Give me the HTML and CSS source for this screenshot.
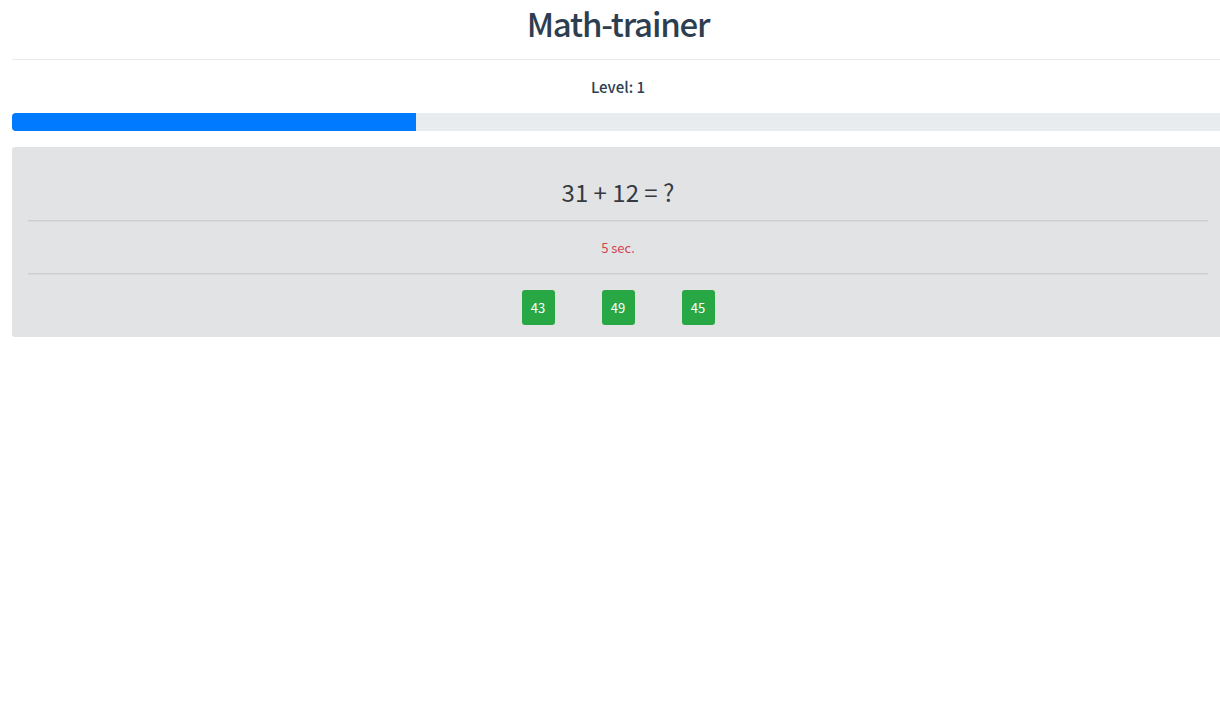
FILE: index.html
```html
<!DOCTYPE html>
<html lang="en">
<head>
<meta charset="utf-8">
<title>Math-trainer</title>
<link rel="stylesheet" href="styles.css">
</head>
<body>
<div class="app">
  <h1 class="title">Math-trainer</h1>
  <hr class="rule">
  <div class="level">Level: 1</div>
  <div class="progress"><div class="progress-bar" style="width: 33.3%"></div></div>
  <div class="card">
    <div class="question">31 + 12 = ?</div>
    <hr class="divider">
    <div class="timer">5 sec.</div>
    <hr class="divider">
    <div class="answers">
      <button class="answer">43</button>
      <button class="answer">49</button>
      <button class="answer">45</button>
    </div>
  </div>
</div>
</body>
</html>
```
FILE: styles.css
```css
html, body {
  margin: 0;
  padding: 0;
  overflow: hidden;
  background: #fff;
}
body {
  font-family: "Noto Sans CJK SC", "Noto Sans", sans-serif;
  color: #2c3e50;
}
.app {
  width: 1212px;
  margin-left: 12px;
  text-align: center;
}
.title {
  margin: 0;
  padding-top: 1px;
  font-size: 33px;
  font-weight: 500;
  letter-spacing: -1.2px;
  line-height: 44px;
  height: 52px;
  box-sizing: border-box;
  color: #2c3e50;
}
.rule {
  margin: 7px 0 0;
  border: 0;
  border-top: 1px solid #e9e9e9;
}
.level {
  margin-top: 16px;
  font-size: 15px;
  line-height: 22px;
  font-weight: 500;
  color: #2c3e50;
}
.progress {
  margin-top: 15px;
  height: 18px;
  background: #e9ecef;
  border-radius: 4px;
  overflow: hidden;
  display: flex;
}
.progress-bar {
  background: #007bff;
  height: 100%;
}
.card {
  margin-top: 16px;
  background: #e2e3e5;
  border-radius: 3px;
  padding: 16px 16px 12px;
  color: #343a40;
}
.question {
  font-size: 24px;
  line-height: 32px;
  margin-top: 13px;
  font-weight: 400;
}
.divider {
  margin: 12px 0 0;
  border: 0;
  border-top: 1px solid #cdced0;
  border-bottom: 1px solid #d8d9db;
}
.timer {
  font-size: 13px;
  color: #d0434f;
  line-height: 18px;
  margin: 17px 0 16px;
}
.answers {
  display: flex;
  justify-content: center;
  gap: 47px;
  margin-top: 15px;
}
.answer {
  width: 33px;
  height: 35px;
  padding: 0;
  border: 0;
  border-radius: 3px;
  background: #28a745;
  color: #fff;
  font-family: "Noto Sans CJK SC", "Noto Sans", sans-serif;
  font-size: 13px;
}
```
